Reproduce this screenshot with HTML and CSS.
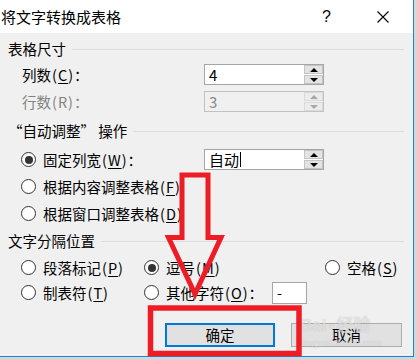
FILE: index.html
```html
<!DOCTYPE html>
<html lang="zh-CN">
  <head>
    <meta charset="UTF-8" />
    <meta name="viewport" content="width=device-width, initial-scale=1.0" />
    <title>将文字转换成表格</title>
    <link rel="stylesheet" href="styles.css">
  </head>
  <body>
    <div class="dialog">
      <div class="titlebar">
        <span class="title">将文字转换成表格</span>
        <span class="help">?</span>
        <svg class="close" width="12" height="12" viewBox="0 0 12 12">
          <path d="M0.5 0.5 L11.5 11.5 M11.5 0.5 L0.5 11.5" stroke="#000" stroke-width="1.1" fill="none" />
        </svg>
      </div>

      <div class="body">
        <div class="group-head">表格尺寸</div>
        <div class="size-rows">
          <div class="row">
            <span class="field-label">列数<span class="acc">(<u>C</u>)</span>：</span>
            <div class="spin">
              <span class="spin-value">4</span>
              <div class="spin-btns">
                <span class="spin-btn"><i class="tri up"></i></span>
                <span class="spin-btn"><i class="tri down"></i></span>
              </div>
            </div>
          </div>
          <div class="row disabled">
            <span class="field-label">行数<span class="acc">(R)</span>：</span>
            <div class="spin">
              <span class="spin-value">3</span>
              <div class="spin-btns">
                <span class="spin-btn"><i class="tri up"></i></span>
                <span class="spin-btn"><i class="tri down"></i></span>
              </div>
            </div>
          </div>
        </div>

        <div class="group-head gap-2">“自动调整” 操作</div>
        <div class="fit-rows">
          <div class="row">
            <label class="radio-label fixed-label"><span class="radio checked"></span>固定列宽<span class="acc">(<u>W</u>)</span>：</label>
            <div class="spin">
              <span class="spin-value">自动<span class="caret"></span></span>
              <div class="spin-btns">
                <span class="spin-btn"><i class="tri up"></i></span>
                <span class="spin-btn"><i class="tri down"></i></span>
              </div>
            </div>
          </div>
          <div class="row">
            <label class="radio-label"><span class="radio"></span>根据内容调整表格<span class="acc">(<u>F</u>)</span></label>
          </div>
          <div class="row">
            <label class="radio-label"><span class="radio"></span>根据窗口调整表格<span class="acc">(<u>D</u>)</span></label>
          </div>
        </div>

        <div class="group-head gap-3">文字分隔位置</div>
        <div class="sep-grid">
          <label class="radio-label"><span class="radio"></span>段落标记<span class="acc">(<u>P</u>)</span></label>
          <label class="radio-label"><span class="radio checked"></span>逗号<span class="acc">(<u>M</u>)</span></label>
          <label class="radio-label"><span class="radio"></span>空格<span class="acc">(<u>S</u>)</span></label>
          <label class="radio-label"><span class="radio"></span>制表符<span class="acc">(<u>T</u>)</span></label>
          <label class="radio-label"><span class="radio"></span>其他字符<span class="acc">(<u>O</u>)</span>：<span class="other-box">-</span></label>
          <span></span>
        </div>

        <div class="buttons">
          <button class="btn default">确定</button>
          <button class="btn">取消</button>
        </div>
      </div>
    </div>

    <div class="watermark">
      <span class="wm-big">Bai<span class="paw">&#9679;</span>经验</span>
      <span class="wm-small">jingyan.baidu.com</span>
    </div>

    <svg class="annot" width="417" height="360" viewBox="0 0 417 360">
      <path d="M182 175 L208 175 L208 237.5 L221 237.5 L195 294 L168.5 237.5 L182 237.5 Z"
            fill="none" stroke="#ee1c25" stroke-width="5" stroke-linejoin="miter" />
      <rect x="150.5" y="308" width="148.5" height="45.5" fill="none" stroke="#ee1c25" stroke-width="5.5" />
    </svg>
  </body>
</html>
```

FILE: styles.css
```css
body {
  margin: 0;
  width: 417px;
  height: 360px;
  overflow: hidden;
  position: relative;
  background-color: #d6d6d6;
  font-family: "Noto Sans CJK SC", "Liberation Sans", sans-serif;
  font-size: 14.5px;
  color: #000;
}
.dialog {
  width: 413px;
  height: 356px;
  background-color: #f0f0f0;
  border-right: 1px solid #1883d7;
  border-bottom: 1px solid #1883d7;
  display: flex;
  flex-direction: column;
}
.titlebar {
  height: 33px;
  background-color: #fff;
  display: flex;
  align-items: center;
}
.title {
  flex: 1;
  margin-left: 1px;
  font-size: 15px;
  line-height: 20px;
}
.help {
  font-family: "Liberation Sans", sans-serif;
  font-size: 16px;
  width: 9px;
  margin-right: 46px;
}
.close {
  margin-right: 24px;
}
.body {
  padding: 8px 9px 0 8px;
}
.group-head {
  display: flex;
  align-items: center;
  gap: 6px;
  height: 16px;
  line-height: 16px;
  white-space: nowrap;
}
.group-head::after {
  content: "";
  flex: 1;
  height: 1px;
  background-color: #dcdcdc;
}
.gap-2 {
  margin-top: 8px;
}
.gap-3 {
  margin-top: 6px;
}
.size-rows {
  margin-top: 4px;
  padding-left: 14px;
}
.fit-rows {
  margin-top: 7px;
  padding-left: 13px;
}
.row {
  display: flex;
  align-items: center;
  height: 27px;
}
.field-label {
  width: 182px;
  line-height: 18px;
}
.fixed-label {
  width: 183px;
}
.disabled {
  color: #838383;
}
.acc {
  letter-spacing: 1px;
  margin-left: 1px;
}
u {
  text-decoration-thickness: 1px;
  text-underline-offset: 2px;
}

/* spin box */
.spin {
  width: 118px;
  height: 19px;
  border: 1px solid #a5a5a5;
  background-color: #fff;
  display: flex;
  align-items: stretch;
}
.spin-value {
  flex: 1;
  padding-left: 4px;
  line-height: 19px;
  font-size: 15px;
  display: flex;
  align-items: center;
}
.caret {
  width: 1px;
  height: 15px;
  background-color: #000;
  margin-left: 1px;
}
.spin-btns {
  width: 19px;
  display: flex;
  flex-direction: column;
  gap: 1px;
  padding: 0 0 0 1px;
}
.spin-btn {
  flex: 1;
  background-color: #e3e3e3;
  border: 1px solid #c4c4c4;
  display: flex;
  align-items: center;
  justify-content: center;
}
.tri {
  width: 0;
  height: 0;
  border-left: 4px solid transparent;
  border-right: 4px solid transparent;
}
.tri.up {
  border-bottom: 4px solid #000;
}
.tri.down {
  border-top: 4px solid #000;
}
.disabled .spin {
  border-color: #c2c2c2;
  background-color: #f0f0f0;
}
.disabled .spin-value {
  color: #8a8a8a;
}
.disabled .spin-btn {
  background-color: #ececec;
  border-color: #dadada;
}
.disabled .tri.up {
  border-bottom-color: #a8a8a8;
}
.disabled .tri.down {
  border-top-color: #a8a8a8;
}

/* radios */
.radio-label {
  display: flex;
  align-items: center;
  line-height: 18px;
  white-space: nowrap;
}
.radio {
  width: 13px;
  height: 13px;
  border: 1px solid #333;
  border-radius: 50%;
  background-color: #fff;
  margin-right: 7px;
  display: flex;
  align-items: center;
  justify-content: center;
  flex-shrink: 0;
}
.radio.checked::after {
  content: "";
  width: 8px;
  height: 8px;
  border-radius: 50%;
  background-color: #333;
}
.sep-grid {
  margin-top: 6px;
  padding-left: 13px;
  display: grid;
  grid-template-columns: 123px 181px auto;
  grid-auto-rows: 25px;
  align-items: center;
}
.other-box {
  width: 35px;
  height: 22px;
  border: 1px solid #a5a5a5;
  background-color: #fff;
  margin-left: 9px;
  padding-left: 4px;
  box-sizing: border-box;
  line-height: 20px;
}

/* buttons */
.buttons {
  margin-top: 18px;
  display: flex;
  justify-content: flex-end;
  gap: 16px;
  padding-right: 2px;
}
.btn {
  width: 111px;
  height: 24px;
  font-family: inherit;
  font-size: 14.5px;
  background-color: #e1e1e1;
  border: 1px solid #adadad;
  padding: 0;
  line-height: 20px;
}
.btn.default {
  width: 110px;
  border: 2px solid #0078d7;
}

/* overlays */
.watermark {
  position: absolute;
  left: 300px;
  top: 316px;
  display: flex;
  flex-direction: column;
  color: rgba(255, 255, 255, 0.55);
  text-shadow: 0 0 1px rgba(120, 120, 120, 0.45);
  pointer-events: none;
}
.wm-big {
  font-family: "Liberation Sans", "Noto Sans CJK SC", sans-serif;
  font-size: 17px;
  font-weight: bold;
  line-height: 20px;
}
.paw {
  font-size: 10px;
  margin: 0 2px;
  vertical-align: top;
}
.wm-small {
  font-family: "Liberation Serif", serif;
  font-size: 11px;
  line-height: 12px;
}
.annot {
  position: absolute;
  left: 0;
  top: 0;
  pointer-events: none;
}
```
